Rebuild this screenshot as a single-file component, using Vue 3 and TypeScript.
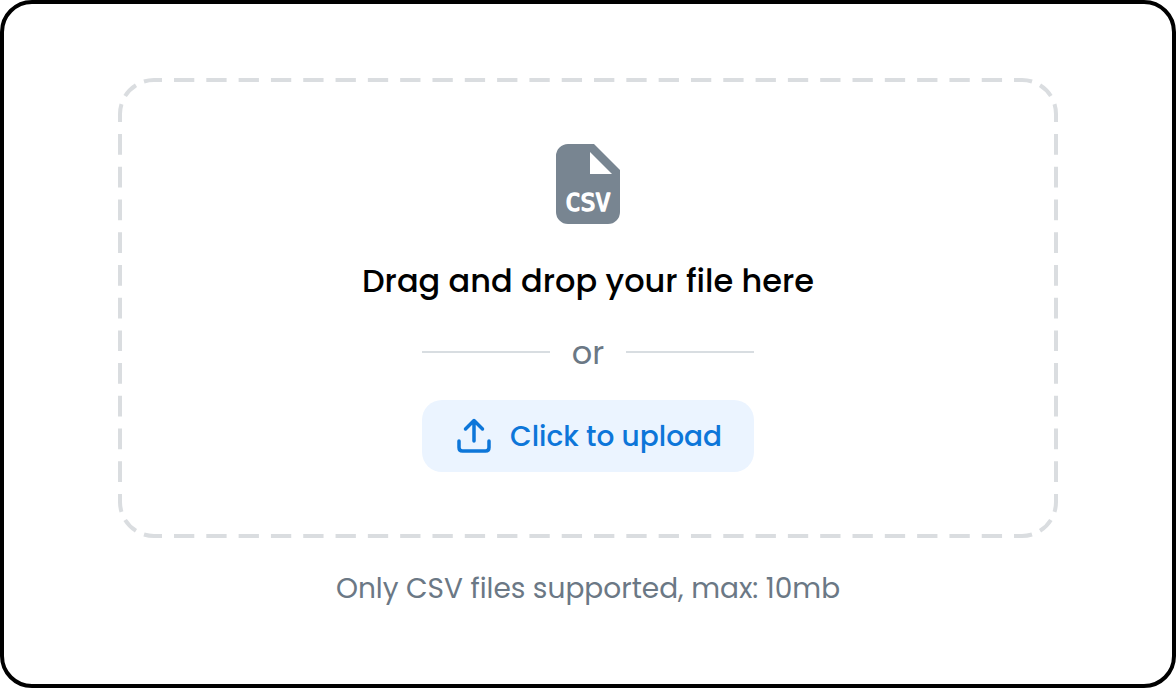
<script setup lang="ts">
import { ref } from 'vue'

const fileInput = ref<HTMLInputElement | null>(null)

const corners = [
  { x: '0', y: '0', flip: 'scale(1 1)' },
  { x: '100%', y: '0', flip: 'scale(-1 1)' },
  { x: '0', y: '100%', flip: 'scale(1 -1)' },
  { x: '100%', y: '100%', flip: 'scale(-1 -1)' },
]

function openPicker(): void {
  fileInput.value?.click()
}
</script>

<template>
  <main class="card">
    <section class="dropzone" @dragover.prevent @drop.prevent>
      <svg class="outline" aria-hidden="true">
        <svg class="edge-x" x="44">
          <line x1="0" y1="2" x2="100%" y2="2" pathLength="852" />
        </svg>
        <svg class="edge-x" x="44" y="100%">
          <line x1="0" y1="-2" x2="100%" y2="-2" pathLength="852" />
        </svg>
        <svg class="edge-y" y="44">
          <line x1="2" y1="0" x2="2" y2="100%" pathLength="372" />
        </svg>
        <svg class="edge-y" x="100%" y="44">
          <line x1="-2" y1="0" x2="-2" y2="100%" pathLength="372" />
        </svg>
        <svg v-for="c in corners" :key="c.flip" class="corner" :x="c.x" :y="c.y">
          <path :transform="c.flip" d="M44 2H36A34 34 0 0 0 2 36V44" />
        </svg>
      </svg>

      <svg class="file-icon" viewBox="0 0 64 80" aria-hidden="true">
        <path
          fill="#788591"
          fill-rule="evenodd"
          d="M12 0H38L64 26V68A12 12 0 0 1 52 80H12A12 12 0 0 1 0 68V12A12 12 0 0 1 12 0ZM34 8V30H56Z"
        />
        <text class="file-type" x="32" y="67" text-anchor="middle">CSV</text>
      </svg>

      <h1 class="title">Drag and drop your file here</h1>

      <div class="actions">
        <div class="divider"><span>or</span></div>
        <button class="upload" type="button" @click="openPicker">
          <svg class="upload-icon" viewBox="0 0 36 36" aria-hidden="true">
            <path d="M18 23V3M9.500 11L18 2.500L26.500 11M3 23V29.500Q3 33 6.500 33H29.500Q33 33 33 29.500V23" />
          </svg>
          <span>Click to upload</span>
        </button>
        <input ref="fileInput" type="file" accept=".csv" aria-label="CSV file" hidden />
      </div>
    </section>

    <p class="hint">Only CSV files supported, max: 10mb</p>
  </main>
</template>

<style>
body {
  background: #fff;
}
</style>

<style scoped>
.card {
  box-sizing: border-box;
  min-height: 100vh;
  padding: 74px 114px;
  border: 4px solid #000;
  border-radius: 32px;
  background: #fff;
  font-family: Poppins, Inter, sans-serif;
  text-align: center;
}

.dropzone {
  position: relative;
  display: flex;
  flex-direction: column;
  align-items: center;
  padding: 66px 32px;
}

.outline {
  position: absolute;
  inset: 0;
  width: 100%;
  height: 100%;
  fill: none;
  stroke: #dadde0;
  stroke-width: 4px;
  pointer-events: none;
}

.edge-x,
.edge-y,
.corner {
  overflow: visible;
}

.edge-x {
  width: calc(100% - 88px);
  stroke-dasharray: 20.31 12;
  stroke-dashoffset: 20.31;
}

.edge-y {
  height: calc(100% - 88px);
  stroke-dasharray: 20.73 12;
  stroke-dashoffset: 20.73;
}

.corner {
  stroke-dasharray: 18.2 8.8 15.4 8.8;
}

.file-icon {
  width: 64px;
  height: 80px;
}

.file-type {
  fill: #fff;
  stroke: #fff;
  stroke-width: 1.5px;
  stroke-linejoin: round;
  font: 400 25px "DejaVu Sans Mono", monospace;
}

.title {
  margin: 33px 0 0;
  color: #000;
  font-size: 32px;
  font-weight: 500;
  line-height: 48px;
}

.actions {
  width: 332px;
  max-width: 100%;
  margin-top: 23px;
}

.divider {
  display: flex;
  align-items: center;
  gap: 22px;
  height: 48px;
  color: #6b7885;
  font-size: 32px;
  line-height: 48px;
}

.divider span {
  padding-top: 2px;
}

.divider::before,
.divider::after {
  flex: 1;
  height: 2px;
  background: #d8dde1;
  content: "";
}

.upload {
  display: flex;
  align-items: center;
  justify-content: center;
  gap: 18px;
  width: 100%;
  height: 72px;
  margin-top: 24px;
  padding: 0 0 0 2px;
  border: 0;
  border-radius: 20px;
  background: #ebf4ff;
  color: #0d76d9;
  font: inherit;
  font-size: 28px;
  font-weight: 500;
  cursor: pointer;
}

.upload span {
  padding-top: 2px;
}

.upload-icon {
  width: 36px;
  height: 36px;
  fill: none;
  stroke: currentColor;
  stroke-width: 3.5px;
  stroke-linecap: round;
  stroke-linejoin: round;
}

.hint {
  margin: 30px 0 0;
  color: #6b7885;
  font-size: 28px;
  line-height: 42px;
}
</style>
